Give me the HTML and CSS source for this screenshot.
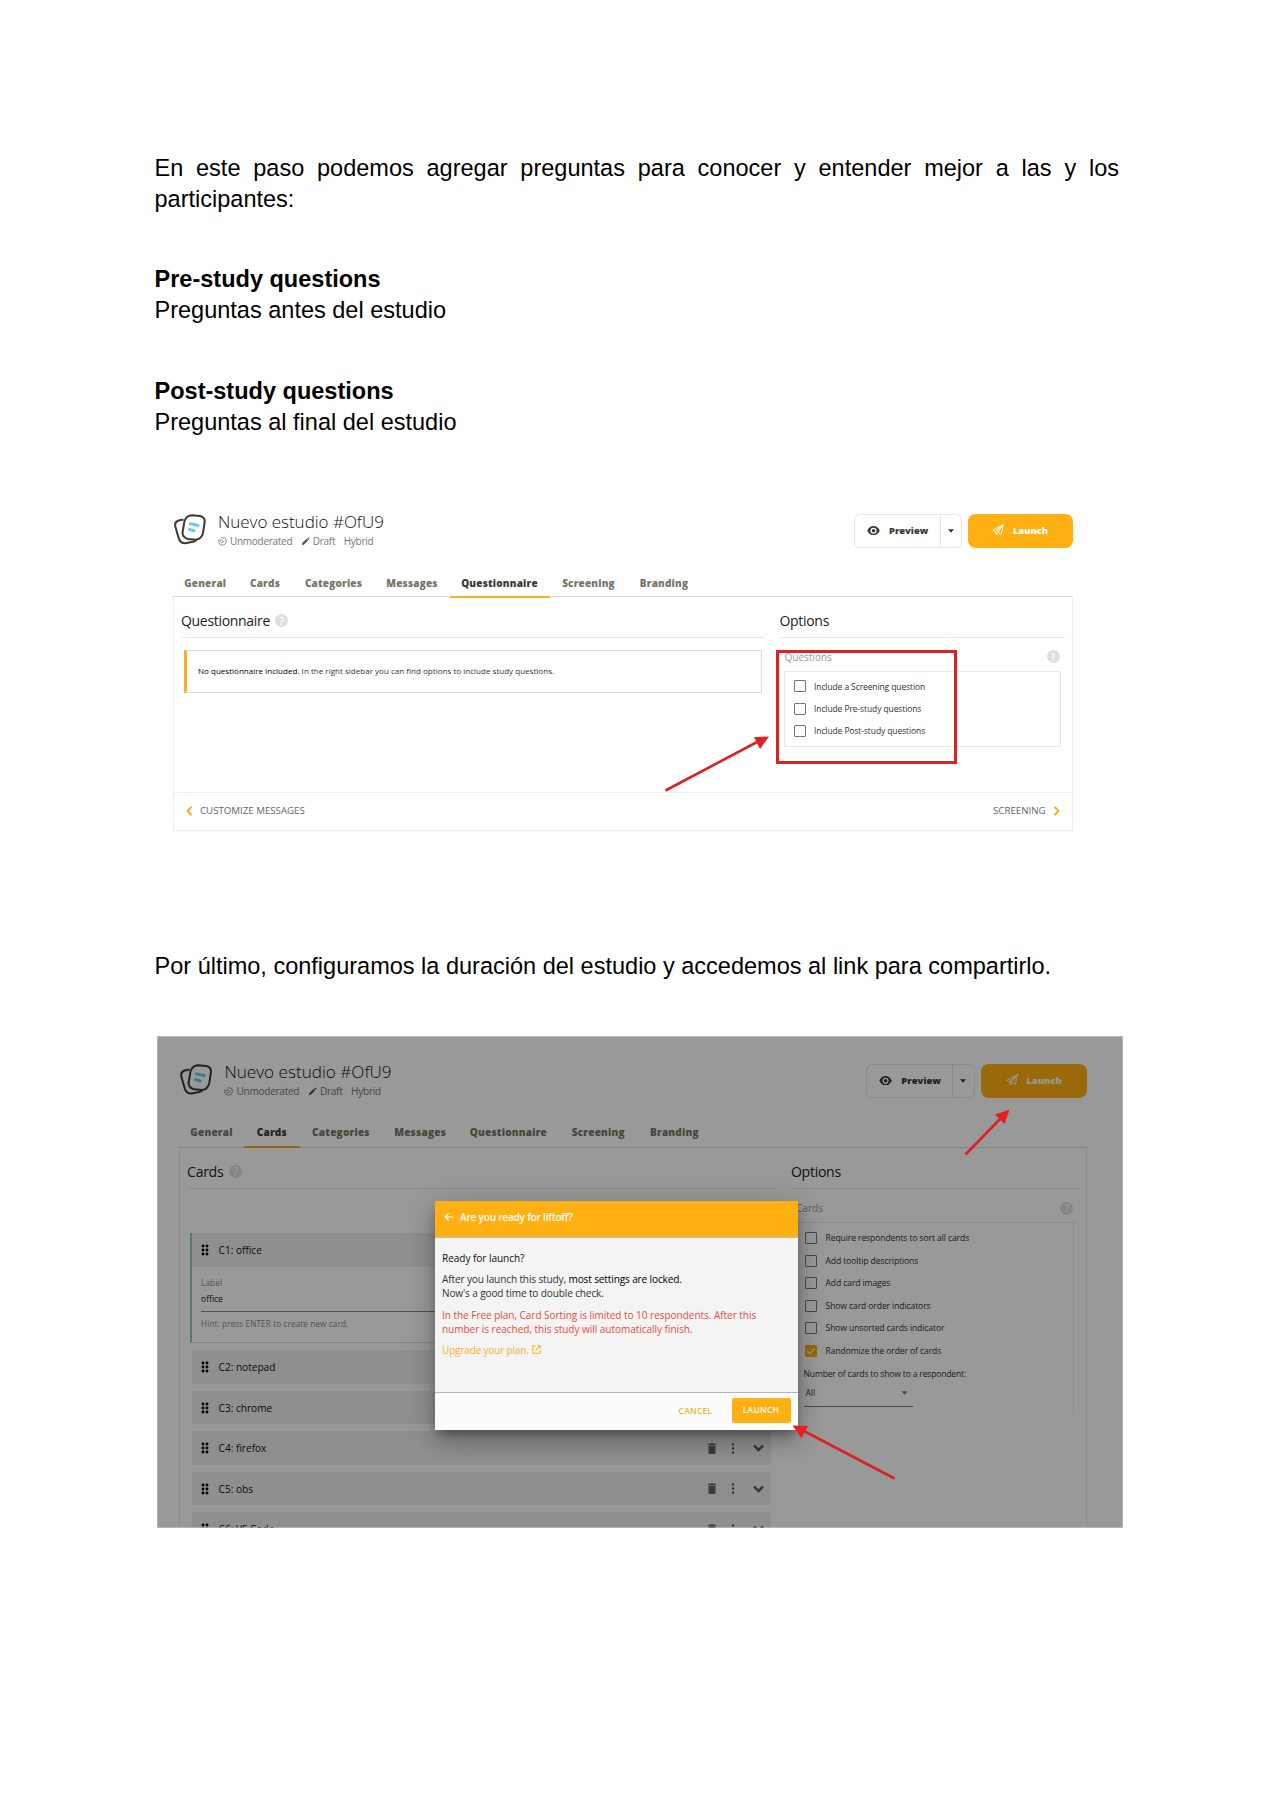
FILE: index.html
```html
<!DOCTYPE html>
<html lang="es">
<head>
<meta charset="utf-8">
<title>Card sorting: cuestionario y lanzamiento</title>
<link rel="stylesheet" href="styles.css">
</head>
<body>
<svg class="defs" width="0" height="0" aria-hidden="true">
  <symbol id="logo" viewBox="0 0 32 31">
    <path d="M9.500 5.500 4.500 6.500Q.5 8 1.200 12L4.500 23.500Q6 29.500 11.500 29.300L19 27.800Q21 27.300 22.500 26" fill="none" stroke="#3b3b30" stroke-width="2"/>
    <path d="M18 1.300 26 2Q31 3 30.700 8L29 19Q27.500 25 22 25.700L14 25Q8.500 23.500 8.500 18.500L10.500 7Q12.500 1.500 18 1.300Z" fill="#fff" stroke="#3b3b30" stroke-width="2"/>
    <path d="M16.300 9.800 24 11.500M15.500 15.500 20 16.700" stroke="#70c7f0" stroke-width="3" stroke-linecap="round"/>
  </symbol>
  <symbol id="badge" viewBox="0 0 10 10"><path d="M3.500 1H7.500Q9.200 1.500 9.200 4.500 9 6.500 7.500 8.300L5 9 2.500 8.300Q.8 7.500.8 5V3.500H5.500M3 5.300 4.500 6.500 7.200 4" fill="none" stroke="#777" stroke-width=".9"/></symbol>
  <symbol id="pencil" viewBox="0 0 10 10"><path d="M1 9 1.400 6.800 6.300 2 8 3.700 3.200 8.600ZM6.900 1.400 7.700.7Q8.200.5 8.700 1L9.300 1.700Q9.600 2.100 9.200 2.500L8.500 3.100Z" fill="#555"/></symbol>
  <symbol id="eye" viewBox="0 0 14 10"><path d="M7 0Q11.500 0 13.700 5 11.500 10 7 10T.3 5Q2.500 0 7 0Z" fill="#3a3a30"/><circle cx="7" cy="5" r="3.300" fill="#fff"/><circle cx="7" cy="5" r="1.900" fill="#3a3a30"/></symbol>
  <symbol id="plane" viewBox="0 0 12 12"><path d="M11.300.7.700 6.200 3.400 7.600ZM11.300.7 3.400 7.600 4.300 11 5.700 8.700M11.300.7 5.400 8.400 9.300 10.200Z" fill="none" stroke="#fff" stroke-width=".9" stroke-linejoin="round"/></symbol>
  <symbol id="caret" viewBox="0 0 6 4"><path d="M0 .3H6L3 3.700Z" fill="currentColor"/></symbol>
  <symbol id="prev" viewBox="0 0 7 10"><path d="M5.500.8 1.500 5 5.500 9.200" fill="none" stroke="#f9b021" stroke-width="2"/></symbol>
  <symbol id="next" viewBox="0 0 7 10"><path d="M1.500.8 5.500 5 1.500 9.200" fill="none" stroke="#f9b021" stroke-width="2"/></symbol>
  <symbol id="grip" viewBox="0 0 8 12"><path d="M2 2h.01M6 2h.01M2 6h.01M6 6h.01M2 10h.01M6 10h.01" stroke="#000" stroke-width="2.900" stroke-linecap="round"/></symbol>
  <symbol id="trash" viewBox="0 0 8 11"><path d="M0 .7H2.500L3 0H5L5.500.7H8V2H0ZM.5 2.600H7.500V10Q7.500 11 6.500 11H1.500Q.5 11 .5 10Z" fill="#666"/></symbol>
  <symbol id="dots" viewBox="0 0 4 11"><path d="M2 1.500h.01M2 5.500h.01M2 9.500h.01" stroke="#555" stroke-width="2.400" stroke-linecap="round"/></symbol>
  <symbol id="down" viewBox="0 0 11 8"><path d="M1 1.500 5.500 6 10 1.500" fill="none" stroke="#555" stroke-width="2.400"/></symbol>
  <symbol id="tick" viewBox="0 0 12 12"><rect width="12" height="12" rx="1.300" fill="#ffb012"/><path d="M2.300 6.200 4.800 8.700 9.700 3.600" fill="none" stroke="#fff" stroke-width="1.200"/></symbol>
  <symbol id="back" viewBox="0 0 10 8"><path d="M9.500 4H1.200M4.600.6 1.200 4 4.600 7.400" fill="none" stroke="#fff" stroke-width="1.200"/></symbol>
  <symbol id="open" viewBox="0 0 8 8"><path d="M3.500.7H.7V7.300H7.300V4.500M4.800.6H7.400V3.200M7.300.7 3 5" fill="none" stroke="#f7b32b" stroke-width=".9"/></symbol>
</svg>

<main class="doc">
  <p class="intro">En este paso podemos agregar preguntas para conocer y entender mejor a las y los participantes:</p>
  <h2>Pre-study questions</h2>
  <p>Preguntas antes del estudio</p>
  <h2>Post-study questions</h2>
  <p>Preguntas al final del estudio</p>
</main>

<section class="shot first">
  <header class="top">
    <svg class="logo"><use href="#logo"/></svg>
    <div class="study">
      <h1>Nuevo estudio #OfU9</h1>
      <div class="meta"><svg><use href="#badge"/></svg><span class="m1">Unmoderated</span><svg><use href="#pencil"/></svg><span class="m2">Draft</span><span>Hybrid</span></div>
    </div>
    <div class="preview"><span class="pv"><svg><use href="#eye"/></svg><b>Preview</b></span><span class="dd"><svg><use href="#caret"/></svg></span></div>
    <div class="launch"><svg><use href="#plane"/></svg><b>Launch</b></div>
  </header>
  <nav class="tabs"><span>General</span><span>Cards</span><span>Categories</span><span>Messages</span><span class="on">Questionnaire</span><span>Screening</span><span>Branding</span></nav>
  <div class="panel">
    <div class="cols">
      <div class="left">
        <h3>Questionnaire <i class="help">?</i></h3>
        <div class="alert"><p><b>No questionnaire included.</b> In the right sidebar you can find options to include study questions.</p></div>
      </div>
      <div class="right">
        <h3>Options</h3>
        <div class="group"><span>Questions</span><i class="help">?</i></div>
        <div class="box">
          <label><i class="cb"></i>Include a Screening question</label>
          <label><i class="cb"></i>Include Pre-study questions</label>
          <label><i class="cb"></i>Include Post-study questions</label>
        </div>
      </div>
    </div>
    <footer class="steps"><span><svg><use href="#prev"/></svg>CUSTOMIZE MESSAGES</span><span>SCREENING<svg><use href="#next"/></svg></span></footer>
  </div>
  <div class="mark"></div>
  <svg class="arrows" viewBox="0 0 966 350"><path d="M508.500 290.500 602 241" stroke="#d92323" stroke-width="2.600"/><path d="M612 236.500 597 237 603 249Z" fill="#e51f1f"/></svg>
</section>

<p class="doc last">Por último, configuramos la duración del estudio y accedemos al link para compartirlo.</p>

<section class="shot second">
  <header class="top">
    <svg class="logo"><use href="#logo"/></svg>
    <div class="study">
      <h1>Nuevo estudio #OfU9</h1>
      <div class="meta"><svg><use href="#badge"/></svg><span class="m1">Unmoderated</span><svg><use href="#pencil"/></svg><span class="m2">Draft</span><span>Hybrid</span></div>
    </div>
    <div class="preview"><span class="pv"><svg><use href="#eye"/></svg><b>Preview</b></span><span class="dd"><svg><use href="#caret"/></svg></span></div>
    <div class="launch"><svg><use href="#plane"/></svg><b>Launch</b></div>
  </header>
  <nav class="tabs"><span>General</span><span class="on">Cards</span><span>Categories</span><span>Messages</span><span>Questionnaire</span><span>Screening</span><span>Branding</span></nav>
  <div class="panel">
    <div class="cols">
      <div class="left">
        <h3>Cards <i class="help">?</i></h3>
        <div class="cards">
          <div class="open">
            <div class="card"><svg class="grip"><use href="#grip"/></svg><span>C1: office</span></div>
            <div class="edit"><small>Label</small><div class="field">office</div><small>Hint: press ENTER to create new card.</small></div>
          </div>
          <div class="card"><svg class="grip"><use href="#grip"/></svg><span>C2: notepad</span></div>
          <div class="card"><svg class="grip"><use href="#grip"/></svg><span>C3: chrome</span></div>
          <div class="card"><svg class="grip"><use href="#grip"/></svg><span>C4: firefox</span><svg class="trash"><use href="#trash"/></svg><svg class="dots"><use href="#dots"/></svg><svg class="down"><use href="#down"/></svg></div>
          <div class="card"><svg class="grip"><use href="#grip"/></svg><span>C5: obs</span><svg class="trash"><use href="#trash"/></svg><svg class="dots"><use href="#dots"/></svg><svg class="down"><use href="#down"/></svg></div>
          <div class="card"><svg class="grip"><use href="#grip"/></svg><span>C6: VS Code</span><svg class="trash"><use href="#trash"/></svg><svg class="dots"><use href="#dots"/></svg><svg class="down"><use href="#down"/></svg></div>
        </div>
      </div>
      <div class="right">
        <h3>Options</h3>
        <div class="group"><span>Cards</span><i class="help">?</i></div>
        <div class="box">
          <label><i class="cb"></i>Require respondents to sort all cards</label>
          <label><i class="cb"></i>Add tooltip descriptions</label>
          <label><i class="cb"></i>Add card images</label>
          <label><i class="cb"></i>Show card order indicators</label>
          <label><i class="cb"></i>Show unsorted cards indicator</label>
          <label><svg class="tick"><use href="#tick"/></svg>Randomize the order of cards</label>
          <div class="count">Number of cards to show to a respondent:</div>
          <div class="select">All<svg><use href="#caret"/></svg></div>
        </div>
      </div>
    </div>
  </div>
  <div class="shade"></div>
  <div class="modal">
    <header><svg><use href="#back"/></svg>Are you ready for liftoff?</header>
    <div class="body">
      <p class="q">Ready for launch?</p>
      <p class="after">After you launch this study, <b>most settings are locked.</b><br>Now's a good time to double check.</p>
      <p class="warn">In the Free plan, Card Sorting is limited to 10 respondents. After this<br>number is reached, this study will automatically finish.</p>
      <p class="up">Upgrade your plan. <svg><use href="#open"/></svg></p>
    </div>
    <footer><span>CANCEL</span><span class="go">LAUNCH</span></footer>
  </div>
  <svg class="arrows" viewBox="0 0 966 493"><path d="M808.500 118.500 845 81M737.500 442.500 646 394.500" stroke="#d92323" stroke-width="2.600"/><path d="M852.500 73.500 838 78.500 847.500 88ZM635.500 389.500 651 390 644.500 402Z" fill="#e51f1f"/></svg>
</section>
</body>
</html>
```

FILE: styles.css
```css
* { box-sizing: border-box; }
body { margin: 0; width: 1274px; height: 1800px; overflow: hidden; background: #fff; color: #000; font-family: "Liberation Sans", Arial, sans-serif; }
h1, h2, h3, p { margin: 0; font-weight: 400; }
i { font-style: normal; }
svg { display: block; flex: none; }
.defs { position: absolute; }

/* document text */
.doc { margin: 0 154.500px; padding-top: 153px; width: 966px; font-size: 23.530px; line-height: 31px; height: 513.500px; }
.doc .intro { text-align: justify; width: 964.500px; }
.doc h2 { font-size: 23.530px; font-weight: 700; margin-top: 49px; }
.doc h2 ~ h2 { margin-top: 50px; }
.doc.last { height: 205px; padding-top: 120.500px; white-space: nowrap; }

/* shared app frame */
.shot { position: relative; font-family: "Open Sans", "Noto Sans", sans-serif; color: #333; font-size: 10px; }
.first { margin-left: 157px; width: 966px; height: 317px; padding: 0 50.500px 0 16px; }
.top { display: flex; height: 3.450em; align-items: flex-start; }
.logo { width: 3.200em; height: 3.100em; margin-left: .100em; }
.study { margin-left: 1.200em; flex: 1; }
.study h1 { font-size: 1.700em; line-height: 1; font-weight: 300; color: #111; white-space: nowrap; letter-spacing: -.001em; margin-top: -.030em; }
.meta { display: flex; align-items: center; margin-top: .480em; line-height: 1.300em; color: #777; letter-spacing: -.028em; }
.meta svg { width: .900em; height: .900em; margin-right: .300em; }
.meta .m1, .meta .m2 { margin-right: .850em; }
.preview { display: flex; height: 3.450em; width: 10.800em; border: 1px solid #e6e6e6; border-radius: .600em; color: #3a3a30; }
.preview b, .launch b { font-weight: 800; font-size: .940em; }
.pv { flex: 1; display: flex; align-items: center; padding: 0 0 .100em 1.200em; }
.pv svg { width: 1.300em; height: .950em; margin-right: .950em; }
.dd { width: 2.100em; border-left: 1px solid #e6e6e6; display: flex; align-items: center; justify-content: center; }
.dd svg { width: .600em; height: .400em; }
.launch { display: flex; align-items: center; justify-content: center; margin-left: .650em; width: 10.450em; height: 3.450em; padding-bottom: .100em; border-radius: .750em; background: #ffb012; color: #fff; }
.launch svg { width: 1.200em; height: 1.200em; margin-right: .850em; }
.tabs { display: grid; grid-template-columns: 6.450em 5.500em 8.200em 7.500em 10em 7.800em 7.300em; height: 4.900em; padding-top: 2.450em; border-bottom: 1px solid #ddd; }
.tabs span { height: 2.500em; line-height: 2em; text-align: center; font-weight: 800; color: #777468; letter-spacing: .020em; }
.tabs .on { color: #3a3a30; border-bottom: 2px solid #f9b021; }
.panel { border: 1px solid #ececec; border-top: 0; }
.cols { display: flex; }
.panel h3 { display: flex; align-items: center; border-bottom: 1px solid #e8e8e8; font-size: 1.400em; height: 2.930em; padding-top: .500em; color: #222; letter-spacing: -.022em; }
.help { display: inline-flex; align-items: center; justify-content: center; width: 13px; height: 13px; border-radius: 50%; background: #dedede; color: #fff; font-size: 10px; line-height: 1; font-weight: 600; letter-spacing: 0; }
h3 .help { margin-left: 5px; }
.left { width: 58.400em; margin-left: .700em; }
.right { width: 28.500em; margin-left: 1.450em; }
.group { display: flex; justify-content: space-between; align-items: center; height: 3.300em; padding: .450em .500em 0; color: #999; }
.box { margin: 0 .400em 0 .450em; border: 1px solid #e8e8e8; height: 7.550em; padding: .300em 0 0 .900em; }
.box label, .count, .select { font-size: .850em; letter-spacing: -.012em; }
.box label { display: flex; align-items: center; height: 2.630em; color: #333; }
.cb { width: 12px; height: 12px; border: 1.500px solid #777; margin-right: 8.500px; margin-left: -.500px; border-radius: 1px; }
.alert { margin: 1.150em .300em 0 .300em; height: 4.300em; border: 1px solid #ddd; border-left: 3px solid #f9b021; display: flex; align-items: center; padding-left: 1.100em; }
.alert p { font-size: .800em; white-space: nowrap; letter-spacing: .003em; margin-top: -2px; }
.alert b { font-weight: 500; color: #000; }
.first .cols { height: 195px; }
.steps { height: 38px; border-top: 1px solid #eee; display: flex; justify-content: space-between; align-items: center; padding: 0 12px 2px 12px; color: #666; font-size: .970em; }
.steps span { display: flex; align-items: center; }
.steps svg { width: 7px; height: 10px; }
.steps span:first-child svg { margin-right: 7px; }
.steps span:last-child svg { margin-left: 7px; }
.mark { position: absolute; left: 619px; top: 136.500px; width: 181px; height: 114px; border: 3px solid #d92323; }
.arrows { position: absolute; left: 0; top: 0; width: 966px; }
.first .arrows { height: 350px; top: -14px; }

/* launch dialog view */
.second { margin-left: 157px; width: 966px; height: 492.500px; overflow: hidden; padding: 28px 36.500px 0 22px; font-size: 10.090px; }
.second .tabs span { line-height: 1.900em; }
.second .panel { height: 600px; }
.second h3 .help { margin-left: 6px; }
.cards { padding: 44px 5px 0 5px; display: flex; flex-direction: column; gap: 7px; }
.card { height: 33.600px; background: #eee; display: flex; align-items: center; padding: 0 7px 0 9px; color: #111; }
.card span { flex: 1; }
.grip { width: 8px; height: 12px; margin-right: 9.500px; }
.trash { width: 8px; height: 11px; }
.dots { width: 4px; height: 11px; margin: 0 18px 0 15px; }
.down { width: 11px; height: 8px; }
.open { border-left: 2px solid #91c9c2; height: 110px; margin-left: -2px; border-bottom: 1px solid #ddd; }
.edit { padding: 9px 9px 0; display: flex; flex-direction: column; }
.edit small { font-size: .810em; color: #888; line-height: 14px; letter-spacing: .015em; }
.field { font-size: .840em; color: #111; line-height: 17px; height: 22px; border-bottom: 1px solid #888; margin-bottom: 5px; }
.second .box { border-bottom: 0; height: 192px; padding-top: 3.500px; }
.tick { width: 12px; height: 12px; margin: 0 8.500px 0 -.500px; }
.count { margin-top: 4.500px; margin-left: -2px; line-height: 14px; letter-spacing: -.020em; }
.box .count { letter-spacing: -.020em; }
.select { display: flex; align-items: center; justify-content: space-between; width: 109px; height: 26px; border-bottom: 1px solid #777; padding: 0 5px 0 2px; margin-left: -2px; }
.select svg { width: 7px; height: 4px; color: #777; }
.shade { position: absolute; inset: 0; background: rgba(0, 0, 0, .4); border: 1px solid rgba(255, 255, 255, .3); }
.modal { position: absolute; left: 278px; top: 165.500px; width: 362.500px; height: 228.500px; background: #f4f4f4; box-shadow: 0 6px 8px -3px rgba(0, 0, 0, .3), 0 12px 20px rgba(0, 0, 0, .2), 0 4px 30px rgba(0, 0, 0, .16); display: flex; flex-direction: column; }
.modal header { height: 36.500px; background: #ffb012; color: #fff; font-weight: 600; letter-spacing: -.022em; border-bottom: 1px solid #bbb; display: flex; align-items: center; padding: 0 0 3px 9px; }
.modal header svg { width: 10px; height: 8px; margin-right: 6px; }
.modal .body { flex: 1; padding: 13px 7px 0; line-height: 14px; color: #333; white-space: nowrap; letter-spacing: -.006em; }
.q { color: #111; font-weight: 500; margin-bottom: 7px; }
.after b { font-weight: 500; color: #000; }
.modal .after { margin-bottom: 8px; letter-spacing: -.014em; }
.warn { color: #ea4d40; font-weight: 500; margin-bottom: 7px; }
.up { color: #f7b32b; display: flex; align-items: center; font-weight: 500; letter-spacing: -.020em; }
.up svg { width: 9px; height: 9px; margin-left: 3px; }
.modal footer { height: 37.500px; border-top: 1px solid #b5b5b5; background: #fcfcfc; display: flex; align-items: center; justify-content: flex-end; padding: 0 7px 1px 0; color: #f7b32b; font-size: 8.500px; font-weight: 600; letter-spacing: .030em; }
.go { width: 59px; height: 25px; line-height: 24px; margin-left: 19px; border-radius: 2px; text-align: center; background: #ffb012; color: #fff; }
```
